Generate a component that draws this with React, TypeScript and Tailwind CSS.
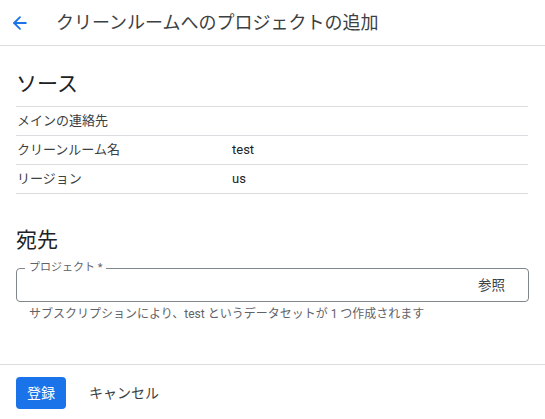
import { ArrowLeft } from 'lucide-react'

const rows = [
  { label: 'メインの連絡先', value: '' },
  { label: 'クリーンルーム名', value: 'test' },
  { label: 'リージョン', value: 'us' },
]

export default function App() {
  return (
    <div
      className="flex h-[419px] w-[545px] flex-col bg-white text-[#3c4043]"
      style={{ fontFamily: 'Roboto, "Noto Sans CJK JP", sans-serif' }}
    >
      <header className="flex h-[46px] shrink-0 items-center border-b border-[#dadce0] pl-[10px]">
        <ArrowLeft className="h-[20px] w-[20px] text-[#1a73e8]" strokeWidth={2.2} />
        <h1 className="ml-[26px] text-[18px] text-[#3c4043]">クリーンルームへのプロジェクトの追加</h1>
      </header>

      <main className="flex-1 px-4">
        <h2 className="mb-[3px] mt-[19px] text-[21px] leading-[38px] text-[#202124]">ソース</h2>
        <div className="mr-[1px] border-t border-[#dadce0]">
          {rows.map((r) => (
            <div key={r.label} className="flex h-[29px] items-center border-b border-[#dadce0] text-[13px]">
              <div className="w-[216px] pl-[1px]">{r.label}</div>
              <div className="text-[#202124]">{r.value}</div>
            </div>
          ))}
        </div>

        <h2 className="mb-[3px] mt-[27px] text-[21px] leading-[38px] text-[#202124]">宛先</h2>
        <div className="relative mt-[9px] flex h-[34px] items-center justify-end rounded-[4px] border border-[#80868b] pr-[23px]">
          <span className="absolute -top-[8px] left-[8px] bg-white px-[4px] text-[11px] leading-[14px] text-[#5f6368]">
            プロジェクト *
          </span>
          <span className="text-[13.5px] text-[#3c4043]">参照</span>
        </div>
        <p className="mt-[3px] pl-[13px] text-[12px] text-[#5f6368]">
          サブスクリプションにより、test というデータセットが 1 つ作成されます
        </p>
      </main>

      <footer className="flex h-[55px] shrink-0 items-start border-t border-[#dadce0] px-4 pt-[12px]">
        <button className="h-[32px] w-[50px] rounded-[4px] bg-[#1a73e8] text-[14px] text-white">登録</button>
        <button className="ml-[23px] h-[32px] text-[14px] text-[#3c4043]">キャンセル</button>
      </footer>
    </div>
  )
}
